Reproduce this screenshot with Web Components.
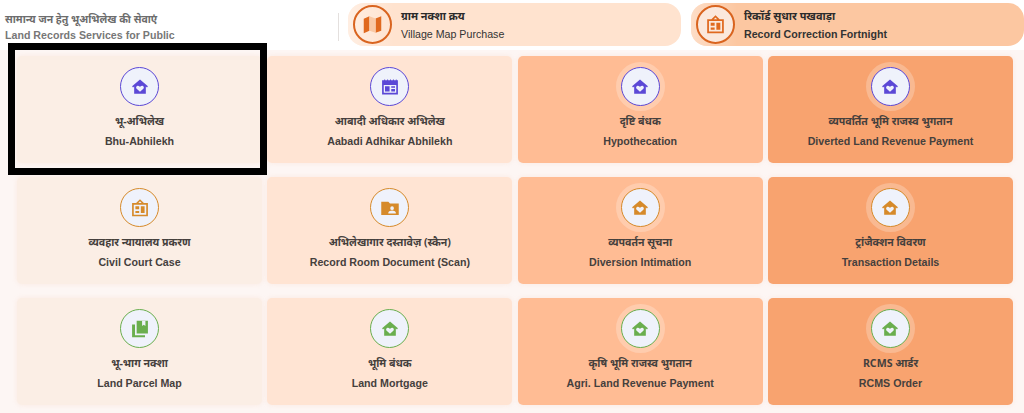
<!DOCTYPE html>
<html lang="hi">
<head>
<meta charset="utf-8">
<title>Land Records Services</title>
<style>
  html, body { margin: 0; padding: 0; }
  body { width: 1024px; height: 413px; overflow: hidden; background: #fff; font-family: "Liberation Sans", "Noto Sans", sans-serif; }
</style>
</head>
<body>
<land-page></land-page>

<script>
const ICONS = {
  home: `<path fill-rule="evenodd" d="M12 3 2.500 11.200 3.600 12.600 5 11.400V20h14v-8.600l1.400 1.200 1.100-1.400zM12 17.800l-4-3.800c-2-2.100 1.300-5 3.200-2.900l.8.800.8-.8c1.900-2.100 5.200.8 3.200 2.900z"/>`,
  table: `<path fill-rule="evenodd" d="M2.500 4H5V3h1.200v1h2.300V3h1.200v1h2.300V3h1.200v1h2.300V3h1.200v1h2.300V3H20v1h1.500v17h-19zm2 5.500V19h15V9.500zm0 0M6 11h5.500v6.500H6zm7.500 0H18v2h-4.500zm0 3.500H18v3h-4.500z"/>`,
  court: `<path fill-rule="evenodd" d="M12 1.500l4.700 4.500H21.500v16h-19V6h4.800zM10 6h4l-2-2zM4.500 8v12h15V8zM6.500 10H11v3.500H6.500zm6.500 0h4.500v8H13zm-6.500 5.500H11V18H6.500z"/>`,
  folder: `<path fill-rule="evenodd" d="M1.500 4.500h8.500l2 2.200h10.500V20.500h-21zM14.500 10a2.200 2.200 0 1 0 0 4.400 2.200 2.200 0 1 0 0-4.400zM10 18.500h9v-1c0-1.700-3-2.500-4.500-2.500s-4.500.8-4.500 2.500z"/>`,
  books: `<path d="M8 2h13.500v15.500H8zM2.500 6.500h3.500V19.500H18v2.500H2.500z"/><path fill="#eff2fb" d="M14.500 2v6.500l2-1.500 2 1.500V2z"/>`,
  map: `<path d="M2 5.500 8.500 2.500V19L2 22zM15.500 5 22 2.500V19l-6.500 2.500z"/><path fill="#f9c9a6" d="M8.500 2.500 15.500 5v16.500L8.500 19z"/>`
};

const makeIcon = (name) => `<svg viewBox="0 0 24 24" aria-hidden="true">${ICONS[name]}</svg>`;

class ServiceCard extends HTMLElement {
  constructor() {
    super();
    this.attachShadow({ mode: "open" });
  }

  static get styles() {
    return `
      :host {
        display: flex;
        flex-direction: column;
        align-items: center;
        height: 106.5px;
        box-sizing: border-box;
        padding-top: 11px;
        border-radius: 5px;
        background: var(--card-bg);
        box-shadow: 0 0 5px rgba(240, 190, 160, .22);
        color: #45403d;
      }
      .ring {
        width: 39px;
        height: 39px;
        box-sizing: border-box;
        border-radius: 50%;
        border: 1px solid var(--tone);
        background: #eff2fb;
        display: flex;
        align-items: center;
        justify-content: center;
        flex: none;
      }
      :host([halo]) .ring { box-shadow: 0 0 0 5px rgba(255, 255, 255, .24); }
      svg { width: 20px; height: 20px; fill: var(--tone); display: block; }
      .hi {
        margin-top: 6px;
        font: 700 10.6px/18px "Noto Sans", "Liberation Sans", sans-serif;
        white-space: nowrap;
      }
      .en {
        margin-top: 4px;
        font: 700 10.65px/14px "Liberation Sans", sans-serif;
        white-space: nowrap;
      }
    `;
  }

  connectedCallback() {
    this.shadowRoot.innerHTML = `
      <style>${ServiceCard.styles}</style>
      <div class="ring">${makeIcon(this.getAttribute("icon"))}</div>
      <div class="hi">${this.getAttribute("hi")}</div>
      <div class="en">${this.getAttribute("en")}</div>
    `;
  }
}

class PromoPill extends HTMLElement {
  constructor() {
    super();
    this.attachShadow({ mode: "open" });
  }

  static get styles() {
    return `
      :host {
        display: flex;
        align-items: center;
        height: 43px;
        border-radius: 16px;
        background: var(--pill-bg);
        color: #333;
      }
      .halo {
        width: 46px;
        height: 43px;
        flex: none;
        border-radius: 16px 0 0 16px;
        background: linear-gradient(90deg, rgba(255, 255, 255, .4), rgba(255, 255, 255, 0));
        display: flex;
        align-items: center;
        justify-content: flex-start;
        padding-left: 5px;
        box-sizing: border-box;
      }
      .ring {
        width: 39px;
        height: 39px;
        box-sizing: border-box;
        border-radius: 50%;
        border: 2px solid #d9641f;
        display: flex;
        align-items: center;
        justify-content: center;
      }
      svg { width: 21px; height: 21px; fill: #e0691f; display: block; }
      :host([soft]) .ring { background: #fbe8dc; }
      .text { margin-left: 7px; }
      .hi { font: 700 10.9px/16px "Noto Sans", "Liberation Sans", sans-serif; color: #2b2b2b; margin-bottom: 3px; }
      .en { font: 400 10.65px/14px "Liberation Sans", sans-serif; }
      :host([strong]) .en { font-weight: 700; }
    `;
  }

  connectedCallback() {
    this.shadowRoot.innerHTML = `
      <style>${PromoPill.styles}</style>
      <div class="halo"><div class="ring">${makeIcon(this.getAttribute("icon"))}</div></div>
      <div class="text">
        <div class="hi">${this.getAttribute("hi")}</div>
        <div class="en">${this.getAttribute("en")}</div>
      </div>
    `;
  }
}

class PageHeader extends HTMLElement {
  constructor() {
    super();
    this.attachShadow({ mode: "open" });
    this.shadowRoot.innerHTML = `
      <style>
        :host {
          display: flex;
          align-items: flex-start;
          height: 50px;
          box-sizing: border-box;
          padding: 3px 0 0 5px;
          background: #fff;
        }
        .title { width: 333px; flex: none; padding-top: 9px; color: #6c6c6c; }
        .hi { font: 700 10.5px/15px "Noto Sans", "Liberation Sans", sans-serif; }
        .en { font: 700 10.65px/14px "Liberation Sans", sans-serif; margin-top: 1px; color: #777; }
        .rule { width: 1px; height: 28px; margin: 10px 9px 0 0; background: #e4e0de; flex: none; }
        ::slotted(promo-pill) { width: 333px; margin-right: 10px; flex: none; }
        ::slotted(promo-pill:last-child) { margin-right: 0; }
      </style>
      <div class="title">
        <div class="hi">सामान्य जन हेतु भूअभिलेख की सेवाएं</div>
        <div class="en">Land Records Services for Public</div>
      </div>
      <div class="rule"></div>
      <slot></slot>
    `;
  }
}

class ServiceGrid extends HTMLElement {
  constructor() {
    super();
    this.attachShadow({ mode: "open" });
    this.shadowRoot.innerHTML = `
      <style>
        :host {
          display: grid;
          grid-template-columns: repeat(4, 245px);
          grid-auto-rows: 106.5px;
          column-gap: 5.33px;
          row-gap: 14.5px;
          padding: 6px 0 8px 17px;
          height: 363px;
          box-sizing: border-box;
          background: #fdf6f4;
        }
      </style>
      <slot></slot>
    `;
  }
}

class LandPage extends HTMLElement {
  constructor() {
    super();
    this.attachShadow({ mode: "open" });
  }

  static get services() {
    const purple = "#5b48d6", amber = "#d68a2a", green = "#6aae4e";
    const bgs = ["#fbeee5", "#ffe4d3", "#ffbc94", "#f8a36f"];
    return [
      ["home", purple, "भू-अभिलेख", "Bhu-Abhilekh"],
      ["table", purple, "आबादी अधिकार अभिलेख", "Aabadi Adhikar Abhilekh"],
      ["home", purple, "दृष्टि बंधक", "Hypothecation"],
      ["home", purple, "व्यपवर्तित भूमि राजस्व भुगतान", "Diverted Land Revenue Payment"],
      ["court", amber, "व्यवहार न्यायालय प्रकरण", "Civil Court Case"],
      ["folder", amber, "अभिलेखागार दस्तावेज़ (स्कैन)", "Record Room Document (Scan)"],
      ["home", amber, "व्यपवर्तन सूचना", "Diversion Intimation"],
      ["home", amber, "ट्रांजैक्शन विवरण", "Transaction Details"],
      ["books", green, "भू-भाग नक्शा", "Land Parcel Map"],
      ["home", green, "भूमि बंधक", "Land Mortgage"],
      ["home", green, "कृषि भूमि राजस्व भुगतान", "Agri. Land Revenue Payment"],
      ["home", green, "RCMS आर्डर", "RCMS Order"]
    ].map((s, i) => ({ icon: s[0], tone: s[1], hi: s[2], en: s[3], bg: bgs[i % 4], halo: i % 4 > 1 }));
  }

  connectedCallback() {
    const cards = LandPage.services.map(s => `
      <service-card icon="${s.icon}" hi="${s.hi}" en="${s.en}" ${s.halo ? "halo" : ""}
        style="--tone:${s.tone};--card-bg:${s.bg}"></service-card>`).join("");

    this.shadowRoot.innerHTML = `
      <style>
        :host { display: block; position: relative; width: 1024px; height: 413px; }
        .mark {
          position: absolute;
          left: 8px;
          top: 43px;
          width: 259px;
          height: 132px;
          box-sizing: border-box;
          border: 7px solid #000;
        }
      </style>
      <page-header>
        <promo-pill icon="map" hi="ग्राम नक्शा क्रय" en="Village Map Purchase" style="--pill-bg:#ffe3cf"></promo-pill>
        <promo-pill icon="court" hi="रिकॉर्ड सुधार पखवाड़ा" en="Record Correction Fortnight" strong soft style="--pill-bg:#fcc7a1"></promo-pill>
      </page-header>
      <service-grid>${cards}</service-grid>
      <div class="mark"></div>
    `;
  }
}

customElements.define("service-card", ServiceCard);
customElements.define("promo-pill", PromoPill);
customElements.define("page-header", PageHeader);
customElements.define("service-grid", ServiceGrid);
customElements.define("land-page", LandPage);
</script>
</body>
</html>
